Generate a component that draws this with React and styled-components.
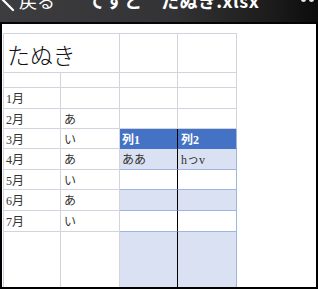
import styled, {createGlobalStyle} from "styled-components";

const GlobalStyle = createGlobalStyle`
html,body{margin:0;padding:0;background:#fff;}
`

const GRID = "#d3d3de";
const HEAD = "#4472c4";
const BAND = "#d9e1f2";
const BAND_LINE = "#9fb5e0";

const Frame = styled.div`
width:318px;
height:289px;
display:flex;
flex-direction:column;
overflow:hidden;
background:#fff;
`
const TopBar = styled.div`
height:22px;
flex:none;
border-bottom:2px solid #050505;
background:linear-gradient(to right,#3d3d3f,#333335 55%,#1c1c1c 85%,#0c0c0c);
overflow:hidden;
`
const BarRow = styled.div`
display:flex;
align-items:flex-start;
margin-top:-11px;
height:32px;
color:#fff;
font-family:"Noto Sans CJK JP",sans-serif;
`
const Back = styled.div`
display:flex;
align-items:flex-start;
gap:4px;
padding-left:1px;
font-size:18px;
line-height:22px;
width:86px;
flex:none;
`
const Title = styled.div`
font-size:18px;
line-height:22px;
font-weight:700;
letter-spacing:0.5px;
flex:1;
white-space:nowrap;
`
const Dots = styled.div`
display:flex;
gap:3px;
padding-top:8px;
padding-right:4px;
`
const Dot = styled.span`
width:5px;
height:5px;
border-radius:50%;
background:#e8e8e8;
`
const SheetArea = styled.div`
flex:1;
border:2px solid #000;
border-top:none;
padding:9px 0 0 1px;
display:flex;
`
const Grid = styled.div`
display:grid;
grid-template-columns:57px 59px 58px 59px;
grid-template-rows:39px 15px 21px 20px 20px 21px 20px 21px 21px 1fr;
border-top:1px solid ${GRID};
border-left:1px solid ${GRID};
height:100%;
box-sizing:border-box;
font-family:"Liberation Serif","Noto Sans CJK JP",serif;
`

const toneBg = {head:HEAD, band:BAND, plain:"#fff", fill:BAND};

const Cell = styled.div`
box-sizing:border-box;
display:flex;
align-items:center;
padding-left:${({$pad})=>$pad||"2px"};
font-size:12px;
white-space:nowrap;
color:${({$tone})=>$tone==="head"?"#fff":"#333"};
font-weight:${({$tone})=>$tone==="head"?700:400};
background:${({$tone})=>toneBg[$tone]||"#fff"};
border-right:1px solid ${({$right})=>$right||GRID};
border-bottom:${({$bottom})=>$bottom==="none"?"none":`1px solid ${$bottom||GRID}`};
grid-column:${({$span})=>$span?`span ${$span}`:"auto"};
`
const BigTitle = styled(Cell)`
font-size:23px;
font-family:"Noto Sans CJK JP",sans-serif;
font-weight:300;
color:#111;
padding-left:3px;
padding-top:2px;
`

const months = [
    {m:"1月", v:""},
    {m:"2月", v:"あ"},
    {m:"3月", v:"い", t:["列1","列2"], tone:"head"},
    {m:"4月", v:"あ", t:["ああ","hっv"], tone:"band"},
    {m:"5月", v:"い", t:["",""], tone:"plain"},
    {m:"6月", v:"あ", t:["",""], tone:"band"},
    {m:"7月", v:"い", t:["",""], tone:"plain"},
];

function TableCells({row}){
    if (!row.t){
        return (
            <>
                <Cell/>
                <Cell/>
            </>
        )
    }
    const line = row.tone==="head"?HEAD:BAND_LINE;
    return (
        <>
            <Cell $tone={row.tone} $right="#000" $bottom={line}>{row.t[0]}</Cell>
            <Cell $tone={row.tone} $right={BAND_LINE} $bottom={line} $pad="3px">{row.t[1]}</Cell>
        </>
    )
}

export default function App(){
    return (
        <>
        <GlobalStyle/>
        <Frame>
            <TopBar>
                <BarRow>
                    <Back>
                        <svg width="14" height="24" viewBox="0 0 14 24" fill="none" stroke="#fff" strokeWidth="2.2" strokeLinecap="round">
                            <path d="M12 1 L2 11 L12 21"/>
                        </svg>
                        <span>戻る</span>
                    </Back>
                    <Title>てすと　たぬき.xlsx</Title>
                    <Dots><Dot/><Dot/></Dots>
                </BarRow>
            </TopBar>
            <SheetArea>
                <Grid>
                    <BigTitle $span={2}>たぬき</BigTitle>
                    <Cell/>
                    <Cell/>

                    <Cell/><Cell/><Cell/><Cell/>

                    {months.map((row)=>(
                        <Row key={row.m} row={row}/>
                    ))}

                    <Cell $bottom="none"/>
                    <Cell $bottom="none"/>
                    <Cell $tone="fill" $right="#000" $bottom="none"/>
                    <Cell $tone="fill" $right={BAND_LINE} $bottom="none"/>
                </Grid>
            </SheetArea>
        </Frame>
        </>
    )
}

function Row({row}){
    return (
        <>
            <Cell $pad="2px">{row.m}</Cell>
            <Cell $pad="3px">{row.v}</Cell>
            <TableCells row={row}/>
        </>
    )
}
